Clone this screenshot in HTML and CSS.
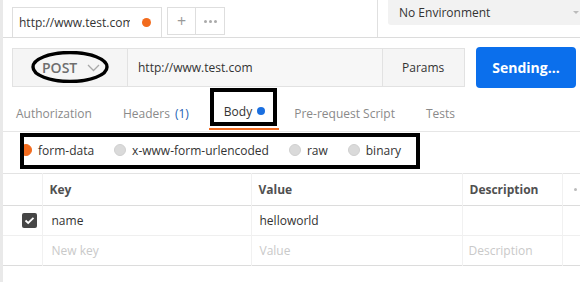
FILE: index.html
```
<!DOCTYPE html>
<html>
<head>
<meta charset="utf-8">
<link rel="stylesheet" href="styles.css">
</head>
<body>
<div class="app">
  <header class="topbar">
    <div class="tabs">
      <div class="tab tab-active"><span class="tab-title">http://www.test.com</span><span class="unsaved"></span></div>
      <div class="tab tab-small">+</div>
      <div class="tab tab-small tab-more"><span></span><span></span><span></span></div>
    </div>
    <div class="env-wrap">
      <div class="env">No Environment<span class="env-caret"></span></div>
    </div>
  </header>

  <div class="request">
    <div class="req-box">
      <div class="method">
        <span class="method-label">POST</span>
        <svg class="chev" width="13" height="8" viewBox="0 0 13 8"><path d="M1 1 L6.5 6.5 L12 1" fill="none" stroke="#a8a8a8" stroke-width="1.3"/></svg>
        <svg class="ellipse" width="78" height="32" viewBox="0 0 78 32"><ellipse cx="39" cy="16" rx="37" ry="14.5" fill="none" stroke="#000" stroke-width="3.4"/></svg>
      </div>
      <div class="url">http://www.test.com</div>
      <div class="params">Params</div>
    </div>
    <button class="send">Sending...</button>
  </div>

  <nav class="req-tabs">
    <div class="rtab rtab-auth">Authorization</div>
    <div class="rtab rtab-headers">Headers<span class="count">(1)</span></div>
    <div class="rtab rtab-body"><div class="rtab-box">Body<span class="blue-dot"></span></div></div>
    <div class="rtab rtab-pre">Pre-request Script</div>
    <div class="rtab">Tests</div>
  </nav>

  <div class="body-types">
    <label class="radio"><span class="radio-dot radio-on"></span>form-data</label>
    <label class="radio"><span class="radio-dot"></span>x-www-form-urlencoded</label>
    <label class="radio"><span class="radio-dot"></span>raw</label>
    <label class="radio"><span class="radio-dot"></span>binary</label>
  </div>

  <table class="kv">
    <thead>
      <tr>
        <th class="c-check"></th>
        <th class="c-key">Key</th>
        <th class="c-val">Value</th>
        <th class="c-desc">Description</th>
        <th class="c-more"><span class="more-dot"></span></th>
      </tr>
    </thead>
    <tbody>
      <tr>
        <td class="c-check"><span class="checkbox"><svg width="11" height="9" viewBox="0 0 11 9"><path d="M1.5 4.5 L4.2 7 L9.5 1.8" fill="none" stroke="#fff" stroke-width="1.8"/></svg></span></td>
        <td class="c-key cell">name</td>
        <td class="c-val cell">helloworld</td>
        <td class="c-desc cell"></td>
        <td class="c-more"></td>
      </tr>
      <tr class="row-new">
        <td class="c-check"></td>
        <td class="c-key cell ph">New key</td>
        <td class="c-val cell ph">Value</td>
        <td class="c-desc cell ph">Description</td>
        <td class="c-more"></td>
      </tr>
    </tbody>
  </table>
</div>
</body>
</html>
```
FILE: styles.css
```
* { box-sizing: border-box; }
html, body { margin: 0; padding: 0; }
body {
  width: 580px;
  height: 282px;
  overflow: hidden;
  background: #fff;
  font-family: "Open Sans", "Liberation Sans", sans-serif;
  font-size: 12px;
  color: #333;
}
.app {
  height: 282px;
  border-left: 3px solid #e9e9e9;
  overflow: hidden;
}

/* top bar */
.topbar {
  display: flex;
  height: 38px;
  border-bottom: 1px solid #dcdcdc;
}
.tabs {
  display: flex;
  align-items: flex-start;
  padding-left: 9px;
  padding-top: 7px;
}
.tab {
  border: 1px solid #dedede;
  border-bottom: 0;
  background: #fff;
  display: flex;
  align-items: center;
}
.tab-active {
  width: 150px;
  height: 30px;
  padding: 0 6px;
}
.tab-title {
  width: 111px;
  overflow: hidden;
  white-space: nowrap;
  color: #333;
}
.unsaved {
  width: 9px;
  height: 9px;
  border-radius: 50%;
  background: #f26b1d;
  margin-left: 12px;
}
.tab-small {
  width: 29px;
  height: 28px;
  justify-content: center;
  color: #999;
  font-size: 16px;
  border-bottom: 1px solid #dedede;
}
.tab-active + .tab-small { margin-left: 5px; }
.tab-more { border-left: 0; gap: 2px; }
.tab-more span {
  width: 3px;
  height: 3px;
  border-radius: 50%;
  background: #aaa;
}
.env-wrap {
  margin-left: auto;
  border-left: 1px solid #e0e0e0;
  padding-left: 10px;
  height: 37px;
}
.env {
  width: 192px;
  height: 25px;
  background: #f2f2f2;
  border-radius: 0 0 0 3px;
  padding-left: 11px;
  display: flex;
  align-items: center;
  color: #333;
}
.env-caret {
  margin-left: auto;
  width: 0;
  height: 0;
  border-left: 3px solid transparent;
  border-right: 3px solid transparent;
  border-top: 3px solid #bbb;
  margin-right: 1px;
}

/* request row */
.request {
  display: flex;
  align-items: center;
  margin: 9px 0 0 9px;
  height: 41px;
}
.req-box {
  display: flex;
  width: 453px;
  height: 39px;
  border: 1px solid #e2e2e2;
  background: #f5f5f5;
}
.method {
  position: relative;
  width: 115px;
  border-right: 1px solid #e2e2e2;
  display: flex;
  align-items: center;
  padding-left: 29px;
}
.method-label {
  font-size: 14px;
  font-weight: 600;
  color: #6e6e6e;
}
.chev { margin-left: 10px; margin-top: 1px; }
.ellipse {
  position: absolute;
  left: 18px;
  top: 2px;
}
.url {
  flex: 1;
  display: flex;
  align-items: center;
  padding-left: 10px;
  color: #333;
  background: #f7f7f7;
}
.params {
  width: 82px;
  border-left: 1px solid #e2e2e2;
  display: flex;
  align-items: center;
  padding-left: 19px;
  color: #333;
}
.send {
  margin-left: 11px;
  width: 100px;
  height: 41px;
  border: 0;
  border-radius: 4px;
  background: #0b6fec;
  color: #fff;
  font-family: "Open Sans", "Liberation Sans", sans-serif;
  font-weight: 700;
  font-size: 14px;
  padding: 0;
}

/* request tabs */
.req-tabs {
  display: flex;
  align-items: stretch;
  height: 44px;
  padding-left: 13px;
  border-bottom: 1px solid #e6e6e6;
  color: #8a8a8a;
}
.rtab {
  display: flex;
  align-items: flex-end;
  padding-bottom: 9px;
  white-space: nowrap;
}
.rtab-auth { margin-right: 31px; }
.rtab-headers { margin-right: 21px; }
.rtab-pre { margin-right: 31px; }
.count { color: #1e5fb4; margin-left: 5px; }
.rtab-body {
  flex-direction: column;
  align-items: stretch;
  padding: 0;
  margin-right: 17px;
}
.rtab-box {
  height: 38px;
  border: 4px solid #000;
  display: flex;
  align-items: flex-end;
  padding: 0 8px 2px 10px;
  color: #333;
  position: relative;
}
.rtab-box::after {
  content: "";
  position: absolute;
  left: -5px;
  right: -6px;
  bottom: -8px;
  height: 2px;
  background: #f26b21;
}
.blue-dot {
  width: 8px;
  height: 8px;
  border-radius: 50%;
  background: #1a6fe0;
  margin: 0 0 5px 5px;
}

/* body types */
.body-types {
  position: relative;
  display: flex;
  align-items: center;
  margin: 1px 0 0 17px;
  width: 400px;
  height: 36px;
  padding-bottom: 2px;
}
.body-types::after {
  content: "";
  position: absolute;
  inset: 0;
  border: 4px solid #000;
}
.radio {
  display: flex;
  align-items: center;
  flex-shrink: 0;
  white-space: nowrap;
  margin-right: 20px;
  color: #333;
}
.radio-dot {
  width: 12px;
  height: 12px;
  border-radius: 50%;
  background: #dadada;
  border: 1px solid #d0d0d0;
  margin-right: 6px;
}
.radio-on {
  background: #f26b1d;
  border-color: #f26b1d;
}

/* table */
.kv {
  margin-top: 4px;
  width: 577px;
  border-collapse: collapse;
  table-layout: fixed;
}
.kv th, .kv td {
  padding: 0;
  border-right: 1px solid #f1f1f1;
  text-align: left;
}
.kv thead tr {
  height: 32px;
  border-top: 1px solid #e3e3e3;
  border-bottom: 1px solid #dcdcdc;
}
.kv th {
  font-weight: 700;
  color: #505050;
  padding-left: 7px;
}
.kv tbody tr { height: 30px; }
.kv tbody tr:first-child { border-bottom: 1px solid #efefef; }
.kv tbody tr.row-new { border-bottom: 1px solid #dcdcdc; }
.c-check { width: 39px; }
.c-key { width: 209px; }
.c-val { width: 211px; }
.c-desc { width: 100px; }
.kv .c-more { border-right: 0; }
.kv th.c-check, .kv th.c-more { padding-left: 0; }
.kv td.cell { padding-left: 9px; color: #333; }
.kv td.c-val { padding-left: 8px; }
.kv td.c-desc { padding-left: 6px; }
.kv td.ph { color: #c9c9c9; }
.more-dot {
  display: block;
  width: 3px;
  height: 3px;
  border-radius: 50%;
  background: #bbb;
  margin-left: 11px;
}
.checkbox {
  display: flex;
  align-items: center;
  justify-content: center;
  width: 15px;
  height: 15px;
  border-radius: 2px;
  background: #464646;
  margin-left: 19px;
}
```
